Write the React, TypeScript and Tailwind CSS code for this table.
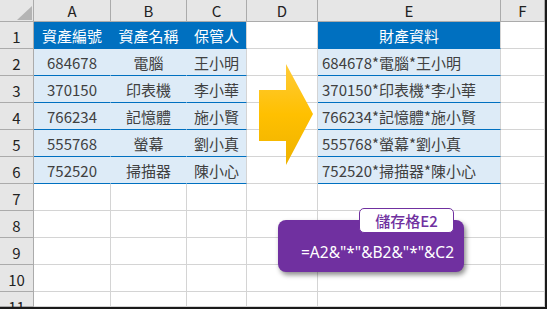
import React from "react";

const cols = ["A", "B", "C", "D", "E", "F"];
const data = [
  ["684678", "電腦", "王小明"],
  ["370150", "印表機", "李小華"],
  ["766234", "記憶體", "施小賢"],
  ["555768", "螢幕", "劉小真"],
  ["752520", "掃描器", "陳小心"],
];

const font = { fontFamily: "'Noto Sans CJK TC', 'Noto Sans', sans-serif" };

function Cell({ r, c }: { r: number; c: number }) {
  const inTable = r >= 1 && r <= 6 && c <= 2;
  const inE = r >= 1 && r <= 6 && c === 4;
  if (inTable || inE) {
    const header = r === 1;
    let text = "";
    if (inTable) {
      text = header ? ["資產編號", "資產名稱", "保管人"][c] : data[r - 2][c];
    } else {
      text = header ? "財產資料" : data[r - 2].join("*");
    }
    const bg = header ? "bg-[#0070c0] text-white" : "bg-[#ddebf7] text-[#404040]";
    const br = inTable && c < 2 ? "border-r-transparent" : "border-r-[#d4d4d4]";
    const align = inE && !header ? "justify-start pl-[4px]" : "justify-center";
    return (
      <div className={`flex items-center ${align} ${bg} border-r border-b border-b-[#0070c0] ${br} text-[15px] leading-none whitespace-nowrap`}>
        <span className="pt-[1px]">{text}</span>
      </div>
    );
  }
  return <div className="border-r border-b border-[#d4d4d4]" />;
}

export default function App() {
  const rows = Array.from({ length: 11 }, (_, i) => i + 1);
  return (
    <div className="relative w-[547px] h-[309px] bg-white border-r-2 border-b-2 border-[#1a1a1a] overflow-hidden" style={font}>
      <div className="grid grid-cols-[34px_77px_76px_60px_71px_183px_44px] grid-rows-[22px_repeat(10,27px)_15px] w-[545px] h-[307px]">
        <div className="relative bg-[#e6e6e6] border-r border-b border-[#ababab]">
          <svg className="absolute left-[17px] top-[6px]" width="15" height="14" viewBox="0 0 15 14">
            <polygon points="15,0 15,14 0,14" fill="#b4b4b4" />
          </svg>
        </div>
        {cols.map((c) => (
          <div key={c} className="flex items-center justify-center bg-[#e6e6e6] border-r border-b border-[#ababab] text-[15px] text-[#222] leading-none">
            {c}
          </div>
        ))}
        {rows.map((r) => (
          <React.Fragment key={r}>
            <div className="flex items-start justify-center pt-[7px] bg-[#e6e6e6] border-r border-b border-[#ababab] text-[15px] text-[#222] leading-none">
              {r}
            </div>
            {cols.map((_, c) => (
              <Cell key={c} r={r} c={c} />
            ))}
          </React.Fragment>
        ))}
      </div>

      <svg className="absolute left-[258px] top-[63px]" width="57" height="104" viewBox="258 63 57 104">
        <defs>
          <linearGradient id="ag" x1="0" y1="0" x2="0" y2="1">
            <stop offset="0" stopColor="#ffcb3a" />
            <stop offset="0.5" stopColor="#ffc000" />
            <stop offset="1" stopColor="#eeb200" />
          </linearGradient>
        </defs>
        <polygon points="259,90 286,90 286,64 313,114 286,165 286,141 259,141" fill="url(#ag)" />
      </svg>

      <div className="absolute left-[278px] top-[220px] w-[186px] h-[52px] rounded-[8px] bg-[#7030a0] shadow-[2px_3px_5px_rgba(0,0,0,0.45)] flex items-center pl-[23px] pt-[14px]">
        <span className="text-white text-[15.5px] leading-none whitespace-nowrap" style={{ fontFamily: "'Noto Sans', sans-serif" }}>
          =A2&amp;"*"&amp;B2&amp;"*"&amp;C2
        </span>
      </div>
      <div className="absolute left-[359px] top-[208px] w-[95px] h-[25px] rounded-[5px] bg-white border border-[#7030a0] flex items-center justify-center">
        <span className="text-[#7030a0] text-[15px] font-medium leading-none">儲存格E2</span>
      </div>
    </div>
  );
}
